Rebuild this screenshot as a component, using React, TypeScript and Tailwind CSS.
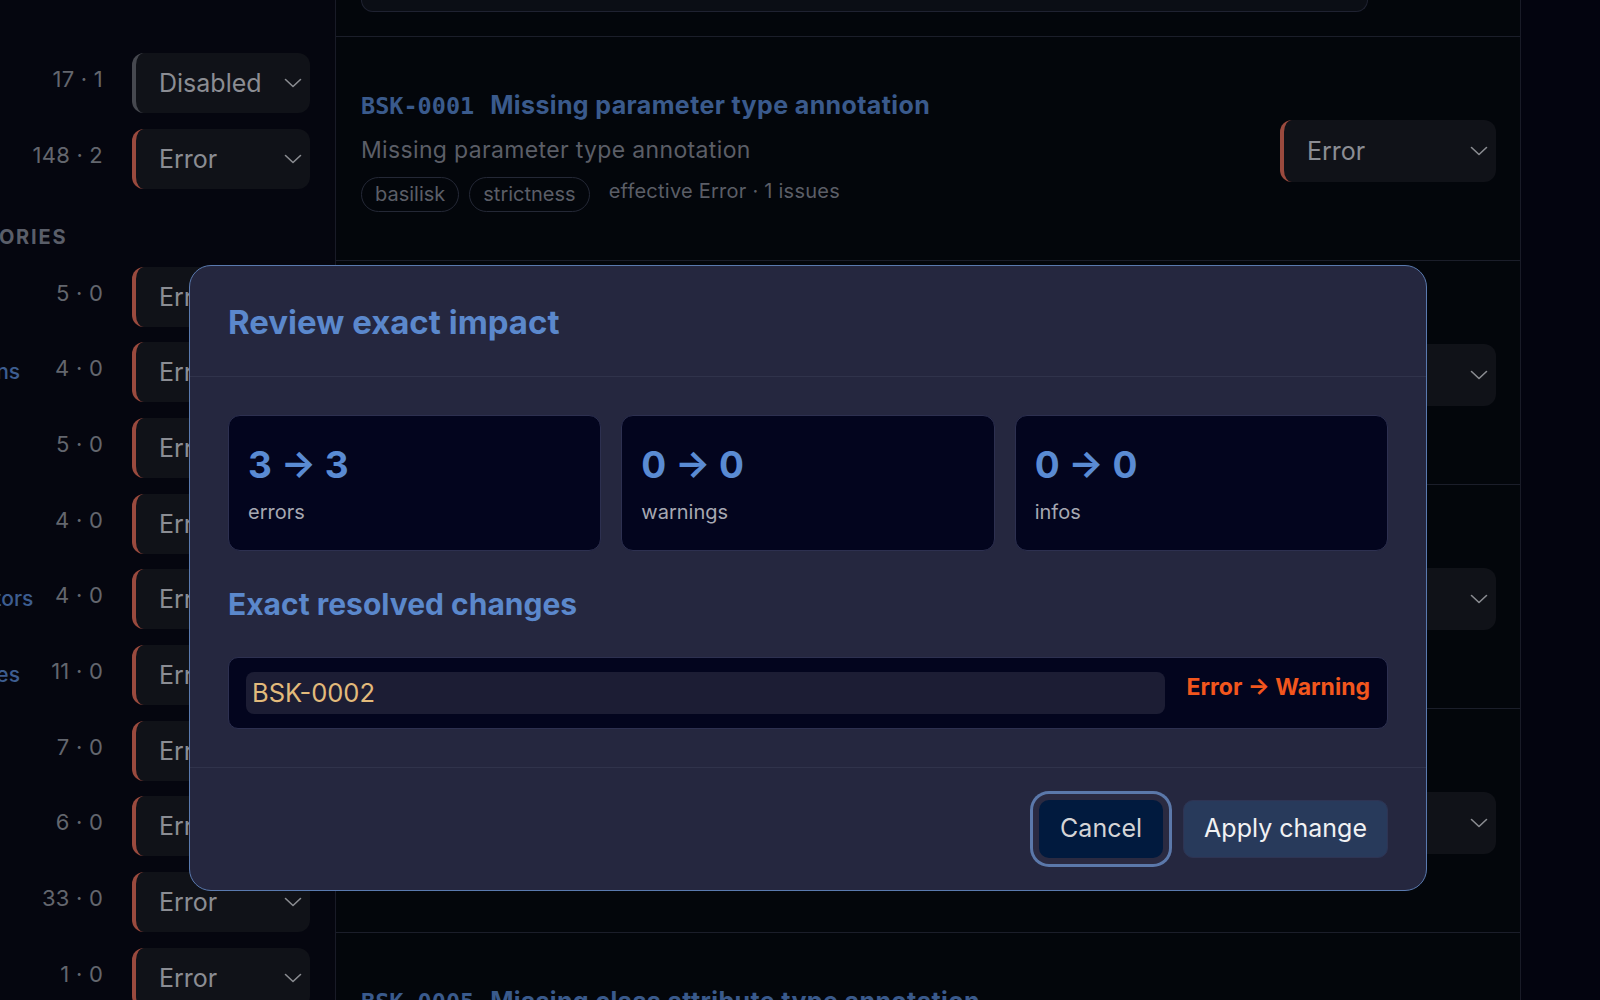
import React from 'react';

/**
 * Rule severity editor with the "Review exact impact" confirmation dialog open.
 * Sidebar lists sources/categories with their severity, main column lists rules.
 */

type Level = 'Error' | 'Disabled';

interface SidebarRow {
  name: string;
  count: string;
  level: Level;
}

interface Rule {
  code: string;
  title: string;
  desc: string;
  tags: string[];
  meta: string;
}

const topRows: SidebarRow[] = [
  { name: 'Style', count: '17 · 1', level: 'Disabled' },
  { name: 'Types', count: '148 · 2', level: 'Error' },
];

const categoryRows: SidebarRow[] = [
  { name: 'Returns', count: '5 · 0', level: 'Error' },
  { name: 'Functions', count: '4 · 0', level: 'Error' },
  { name: 'Imports', count: '5 · 0', level: 'Error' },
  { name: 'Calls', count: '4 · 0', level: 'Error' },
  { name: 'Decorators', count: '4 · 0', level: 'Error' },
  { name: 'Attributes', count: '11 · 0', level: 'Error' },
  { name: 'Loops', count: '7 · 0', level: 'Error' },
  { name: 'Async', count: '6 · 0', level: 'Error' },
  { name: 'Other', count: '33 · 0', level: 'Error' },
  { name: 'Misc', count: '1 · 0', level: 'Error' },
];

const rules: Rule[] = [
  {
    code: 'BSK-0001',
    title: 'Missing parameter type annotation',
    desc: 'Missing parameter type annotation',
    tags: ['basilisk', 'strictness'],
    meta: 'effective Error · 1 issues',
  },
  {
    code: 'BSK-0002',
    title: 'Missing return type annotation',
    desc: 'Missing return type annotation',
    tags: ['basilisk', 'strictness'],
    meta: 'effective Error · 3 issues',
  },
  {
    code: 'BSK-0003',
    title: 'Missing variable type annotation',
    desc: 'Missing variable type annotation',
    tags: ['basilisk', 'strictness'],
    meta: 'effective Error · 0 issues',
  },
  {
    code: 'BSK-0004',
    title: 'Implicit Any in signature',
    desc: 'Implicit Any in signature',
    tags: ['basilisk', 'strictness'],
    meta: 'effective Error · 0 issues',
  },
  {
    code: 'BSK-0005',
    title: 'Missing class attribute type annotation',
    desc: 'Missing class attribute type annotation',
    tags: ['basilisk', 'strictness'],
    meta: 'effective Error · 0 issues',
  },
];

const stats = [
  { value: '3 → 3', label: 'errors' },
  { value: '0 → 0', label: 'warnings' },
  { value: '0 → 0', label: 'infos' },
];

const Chevron: React.FC = () => (
  <svg width="18" height="10" viewBox="0 0 18 10" fill="none" stroke="#8a8c91" strokeWidth="1.6" strokeLinecap="round" strokeLinejoin="round">
    <path d="M1.5 1.5 9 8.5 16.5 1.5" />
  </svg>
);

const LevelSelect: React.FC<{ level: Level; className: string }> = ({ level, className }) => {
  const accent = level === 'Disabled' ? 'border-l-[#46484f]' : 'border-l-[#9a4a3e]';
  return (
    <div
      className={`flex shrink-0 items-center justify-between rounded-[12px] border-l-[4px] bg-[#101218] pl-[23px] pr-[8px] ${accent} ${className}`}
    >
      <span className="text-[25px] leading-[30px] text-[#8b8d93]">{level}</span>
      <Chevron />
    </div>
  );
};

const SideRow: React.FC<{ row: SidebarRow }> = ({ row }) => (
  <div className="flex h-[60px] items-center">
    <span className="min-w-0 flex-1 whitespace-nowrap text-[21px] font-medium leading-[28px] text-[#3d5d90]">
      {row.name}
    </span>
    <span className="mb-[8px] whitespace-nowrap text-[22px] leading-[28px] tracking-[0.01em] text-[#63666e]">
      {row.count}
    </span>
    <LevelSelect level={row.level} className="ml-[29px] h-[60px] w-[178px]" />
  </div>
);

const RuleRow: React.FC<{ rule: Rule }> = ({ rule }) => (
  <div className="flex h-[224px] items-center justify-between border-b border-[#1b1e2a] pl-[25px] pr-[24px] pt-[4px]">
    <div>
      <div className="flex items-baseline gap-[16px] leading-[30px] text-[#3a5a8c]">
        <span className="font-['DejaVu_Sans_Mono',monospace] text-[23.5px] font-bold">{rule.code}</span>
        <span className="text-[25px] font-bold tracking-[0.015em]">{rule.title}</span>
      </div>
      <p className="mt-[15px] text-[23px] leading-[28px] tracking-[0.015em] text-[#5b5e67]">{rule.desc}</p>
      <div className="mt-[13px] flex items-center gap-[10px]">
        {rule.tags.map((tag) => (
          <span
            key={tag}
            className="flex h-[35px] items-center rounded-full border-[1.5px] border-[#242836] px-[13px] text-[20px] text-[#5b5e67]"
          >
            {tag}
          </span>
        ))}
        <span className="mb-[6px] ml-[9px] text-[20px] leading-[26px] tracking-[0.012em] text-[#5b5e67]">{rule.meta}</span>
      </div>
    </div>
    <LevelSelect level="Error" className="h-[62px] w-[216px]" />
  </div>
);

const ImpactDialog: React.FC = () => (
  <div className="absolute left-[189px] top-[265px] w-[1238px] overflow-hidden rounded-[22px] border-[1.5px] border-[#5a7aaf] bg-[#25273f]">
    <div className="border-b border-[#30334b] px-[38px] pb-[36px] pt-[38px]">
      <h2 className="text-[33px] font-bold leading-[36px] text-[#5b88cc]">Review exact impact</h2>
    </div>

    <div className="p-[38px]">
      <div className="grid grid-cols-3 gap-[20px]">
        {stats.map((s) => (
          <div key={s.label} className="h-[136px] rounded-[12px] border border-[#2d3050] bg-[#03051e] px-[19px] pt-[27px]">
            <div className="text-[37px] font-bold leading-[44px] text-[#5a8bd3]">{s.value}</div>
            <div className="mt-[12px] text-[20px] leading-[26px] text-[#a6a8b2]">{s.label}</div>
          </div>
        ))}
      </div>

      <h3 className="mt-[36px] text-[30px] font-bold leading-[34px] text-[#5b88cc]">Exact resolved changes</h3>

      <div className="mt-[36px] flex h-[72px] items-start rounded-[10px] border border-[#2d3050] bg-[#03051e] px-[17px] pt-[14px]">
        <code className="flex h-[42px] flex-1 items-center rounded-[8px] bg-[#1c1d34] pl-[6px] font-['Inter',sans-serif] text-[25.5px] text-[#e2ba7b]">
          BSK-0002
        </code>
        <span className="ml-[22px] mt-[1px] whitespace-nowrap text-[23px] font-bold leading-[28px] text-[#f2561d]">
          Error → Warning
        </span>
      </div>
    </div>

    <div className="flex justify-end gap-[20px] border-t border-[#30334b] px-[38px] py-[32px]">
      <button className="h-[58px] rounded-[10px] bg-[#011a3e] px-[21px] text-[25px] text-[#d4d4d6] shadow-[0_0_0_6px_#2a2a41,0_0_0_9px_#5b78aa]">
        Cancel
      </button>
      <button className="h-[58px] rounded-[10px] border border-[#2e3453] bg-[#283a5b] px-[20px] text-[25px] text-[#f1f1f3]">
        Apply change
      </button>
    </div>
  </div>
);

const App: React.FC = () => {
  return (
    <div className="relative flex h-[1000px] w-full overflow-hidden bg-[#03040f] font-['Inter',sans-serif]">
      <aside className="w-[336px] shrink-0 overflow-hidden border-r border-[#191b27] bg-[#05060f]">
        <div className="ml-[-78px] pr-[25px] pt-[53px]">
          <div className="flex flex-col gap-[15.67px]">
            {topRows.map((r) => (
              <SideRow key={r.name} row={r} />
            ))}
          </div>
          <div className="mb-[18px] mt-[36px] whitespace-nowrap text-[20px] font-bold leading-[24px] tracking-[0.09em] text-[#5a5e69]">
            CATEGORIES
          </div>
          <div className="flex flex-col gap-[15.67px]">
            {categoryRows.map((r) => (
              <SideRow key={r.name} row={r} />
            ))}
          </div>
        </div>
      </aside>

      <main className="w-[1185px] shrink-0 border-r border-[#191b27] bg-[#03060b]">
        <div className="border-b border-[#1b1e2a] pb-[24px] pl-[25px]">
          <div className="h-[12px] w-[1007px] rounded-b-[12px] border border-t-0 border-[#1f2231] bg-[#0b0e15]" />
        </div>
        {rules.map((rule) => (
          <RuleRow key={rule.code} rule={rule} />
        ))}
      </main>

      <div className="flex-1" />

      <ImpactDialog />
    </div>
  );
};

export default App;
